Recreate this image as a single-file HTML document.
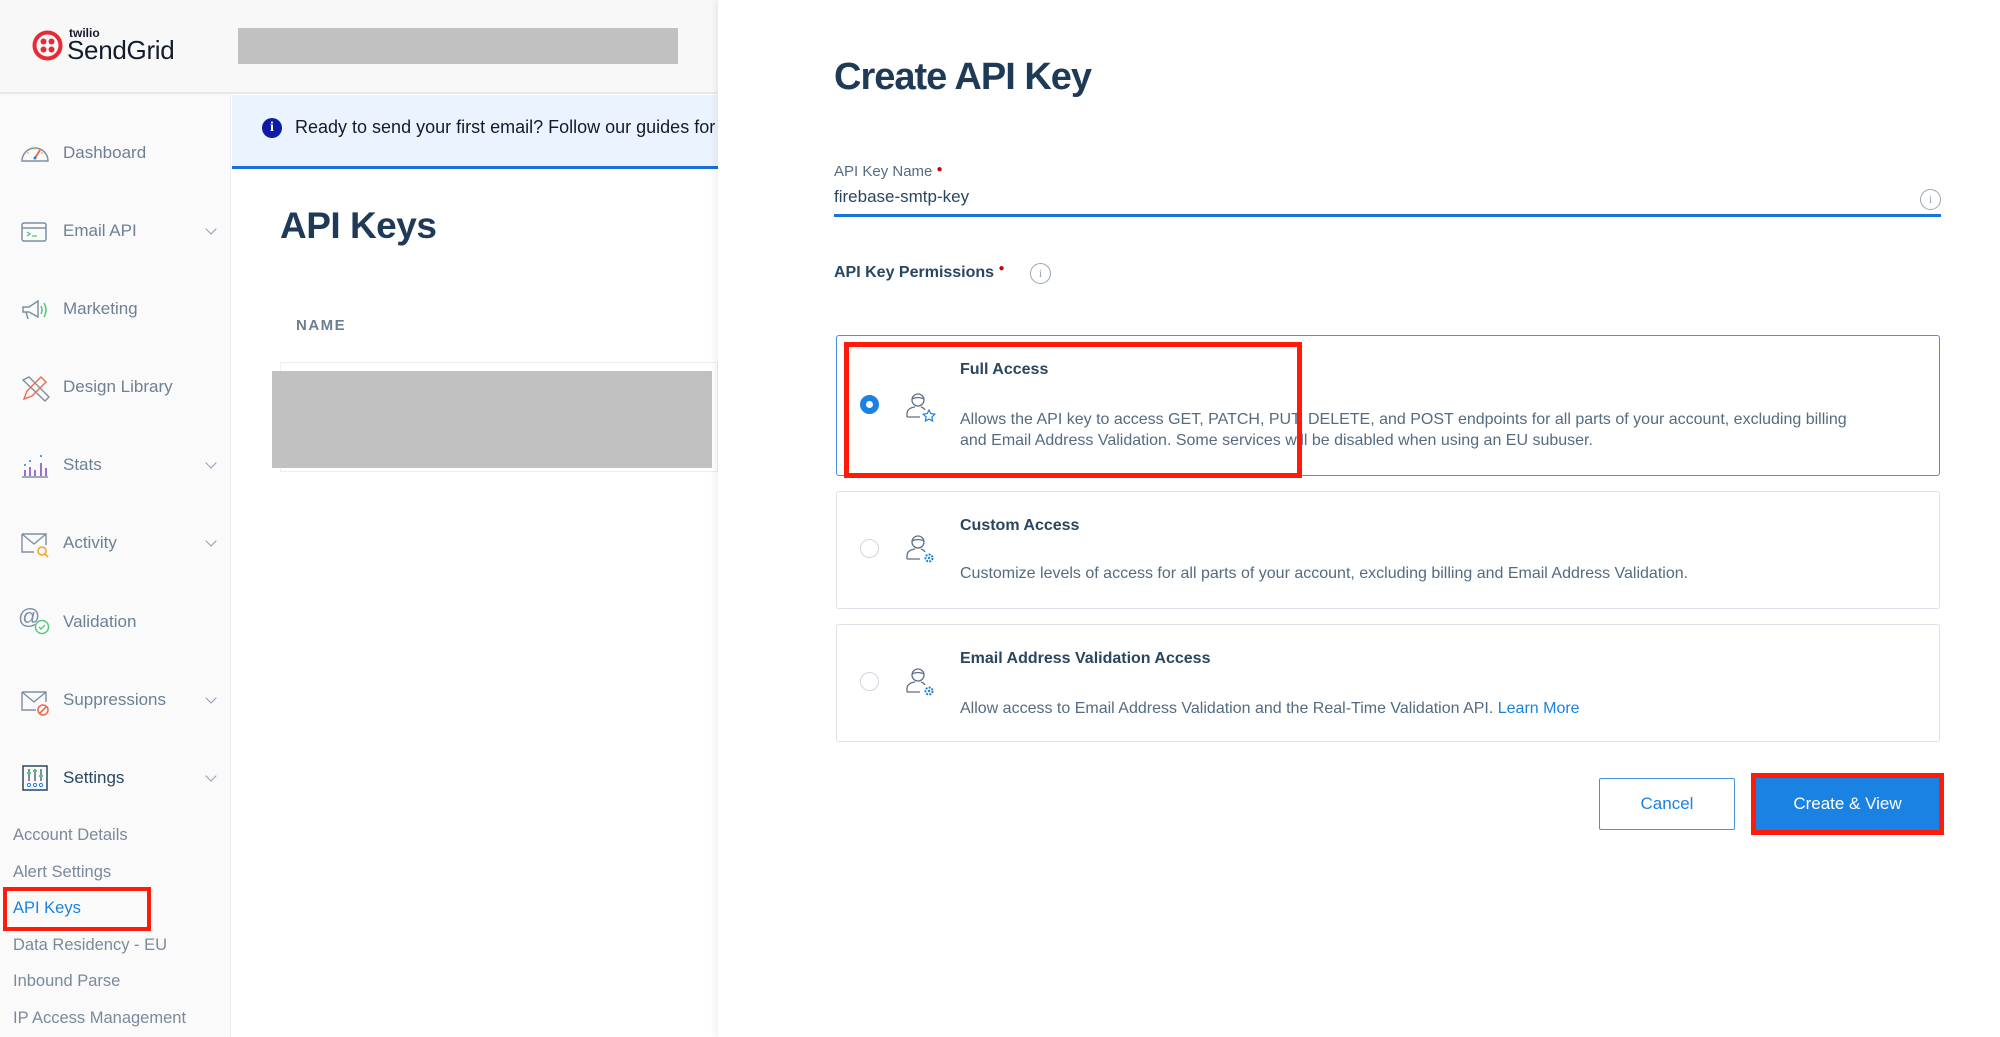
<!DOCTYPE html>
<html><head><meta charset="utf-8">
<style>
*{margin:0;padding:0;box-sizing:border-box}
body{width:2000px;height:1037px;overflow:hidden;background:#fff;font-family:"Liberation Sans",sans-serif;position:relative}
.abs{position:absolute}
.side{left:0;top:94px;width:231px;height:943px;background:#fafafa;border-right:1px solid #eceff2}
.hdr{left:0;top:0;width:718px;height:94px;background:#f8f8f8;border-bottom:2px solid #e6e9ee}
.nav{position:absolute;left:63px;font-size:17px;color:#6d8096;line-height:20px}
.ico{position:absolute;left:20px}
.chev{position:absolute;left:207px;width:8px;height:8px;border-right:1.5px solid #8a9bb0;border-bottom:1.5px solid #8a9bb0;transform:rotate(45deg)}
.sub{position:absolute;left:13px;font-size:16.5px;color:#7a8a9c;line-height:20px}
.panel{left:718px;top:0;width:1282px;height:1037px;background:#fff;box-shadow:-3px 0 6px rgba(0,0,0,0.06)}
.card{position:absolute;left:836px;width:1104px;border:1.5px solid #dde2e8;border-radius:3px;background:#fff}
.ct{position:absolute;left:960px;font-size:16px;font-weight:bold;color:#294661}
.cd{position:absolute;left:960px;font-size:16px;color:#546b81;line-height:21px;width:900px}
.radio{position:absolute;left:860px;width:19px;height:19px;border-radius:50%;border:1.5px solid #cfd6de;background:#fff}
</style></head><body>
<div class="abs hdr"></div>
<svg class="abs" style="left:32px;top:30px" width="31" height="31" viewBox="0 0 31 31"><circle cx="15.5" cy="15.5" r="13" fill="none" stroke="#e42c36" stroke-width="4"/><circle cx="11.5" cy="11.5" r="3" fill="#e42c36"/><circle cx="19.5" cy="11.5" r="3" fill="#e42c36"/><circle cx="11.5" cy="19.5" r="3" fill="#e42c36"/><circle cx="19.5" cy="19.5" r="3" fill="#e42c36"/></svg>
<div class="abs" style="left:69px;top:27px;font-size:12px;font-weight:bold;color:#121c2d;line-height:12px">twilio</div>
<div class="abs" style="left:67px;top:36px;font-size:26px;color:#121c2d;line-height:28px;letter-spacing:-0.3px">SendGrid</div>
<div class="abs" style="left:238px;top:28px;width:440px;height:36px;background:#c1c1c1"></div>

<div class="abs side"></div>
<svg class="ico" style="top:141px" width="30" height="22" viewBox="0 0 30 22"><path d="M2 20 A13 13 0 0 1 28 20 Z" fill="none" stroke="#7d8fa3" stroke-width="1.5"/><path d="M15 17 L20 9" stroke="#ee6b4d" stroke-width="2"/><circle cx="15" cy="17" r="1.5" fill="#1a82e2"/><circle cx="8" cy="12" r="1" fill="#f7c842"/><circle cx="15" cy="8" r="1" fill="#f7c842"/><circle cx="22" cy="12" r="1" fill="#f7c842"/></svg>
<div class="nav" style="top:143px">Dashboard</div>
<svg class="ico" style="top:221px" width="28" height="22" viewBox="0 0 28 22"><rect x="2" y="2" width="24" height="18" rx="2" fill="none" stroke="#7d8fa3" stroke-width="1.5"/><path d="M2 7 H26" stroke="#7d8fa3" stroke-width="1.5"/><path d="M7 11 l3 2 -3 2" fill="none" stroke="#52c97b" stroke-width="1.3"/><path d="M12 15 h5" stroke="#52c97b" stroke-width="1.3"/></svg>
<div class="nav" style="top:221px">Email API</div><div class="chev" style="top:225px"></div>
<svg class="ico" style="top:298px" width="30" height="24" viewBox="0 0 30 24"><path d="M3 9 h6 l9 -6 v16 l-9 -5 h-6 z M6 14 l2 7" fill="none" stroke="#7d8fa3" stroke-width="1.5"/><path d="M21 8 q2 4 0 8 M24 5 q4 7 0 14" fill="none" stroke="#52c97b" stroke-width="1.5"/></svg>
<div class="nav" style="top:299px">Marketing</div>
<svg class="ico" style="top:375px" width="30" height="28" viewBox="0 0 30 28"><path d="M3 5 l6 -3 20 20 -4 4 z" fill="none" stroke="#7d8fa3" stroke-width="1.4"/><path d="M4 24 l3 -8 14 -14 5 5 -14 14 z" fill="none" stroke="#ee6b4d" stroke-width="1.4"/></svg>
<div class="nav" style="top:377px">Design Library</div>
<svg class="ico" style="top:453px" width="30" height="26" viewBox="0 0 30 26"><path d="M2 24 H28" stroke="#7d8fa3" stroke-width="1.5"/><path d="M5 23 v-6 M10 23 v-9 M15 23 v-6 M21 23 v-13 M26 23 v-8" stroke="#9b6ed8" stroke-width="2"/><circle cx="5" cy="12" r="1" fill="#1a82e2"/><circle cx="10" cy="8" r="1" fill="#1a82e2"/><circle cx="21" cy="3" r="1" fill="#1a82e2"/></svg>
<div class="nav" style="top:455px">Stats</div><div class="chev" style="top:459px"></div>
<svg class="ico" style="top:531px" width="32" height="28" viewBox="0 0 32 28"><path d="M2 3 h24 v11 M2 3 v18 h12 M2 3 l12 10 12 -10" fill="none" stroke="#7d8fa3" stroke-width="1.4"/><circle cx="22" cy="20" r="4" fill="none" stroke="#f6a623" stroke-width="1.6"/><path d="M25 23 l3 3" stroke="#f6a623" stroke-width="1.6"/></svg>
<div class="nav" style="top:533px">Activity</div><div class="chev" style="top:537px"></div>
<svg class="ico" style="top:604px;left:18px" width="34" height="32" viewBox="0 0 34 32"><text x="0" y="20" font-family="Liberation Sans" font-size="22" fill="#7d8fa3">@</text><circle cx="24" cy="23" r="6.5" fill="#fff" stroke="#52c97b" stroke-width="1.5"/><path d="M21 23 l2 2 4 -4" fill="none" stroke="#52c97b" stroke-width="1.5"/></svg>
<div class="nav" style="top:612px">Validation</div>
<svg class="ico" style="top:689px" width="32" height="28" viewBox="0 0 32 28"><path d="M2 3 h24 v10 M2 3 v18 h14 M2 3 l12 10 12 -10" fill="none" stroke="#7d8fa3" stroke-width="1.4"/><circle cx="23" cy="21" r="5" fill="none" stroke="#ee6b4d" stroke-width="1.6"/><path d="M20 24 l6 -6" stroke="#ee6b4d" stroke-width="1.6"/></svg>
<div class="nav" style="top:690px">Suppressions</div><div class="chev" style="top:694px"></div>
<svg class="ico" style="top:765px;left:22px" width="26" height="26" viewBox="0 0 26 26"><rect x="1" y="1" width="24" height="24" fill="none" stroke="#294661" stroke-width="1.5"/><path d="M7 4 v12 M13 4 v12 M19 4 v12" stroke="#294661" stroke-width="1.2"/><path d="M5 8 h4 M11 6 h4 M17 11 h4" stroke="#52c97b" stroke-width="2"/><circle cx="7" cy="20" r="1.6" fill="none" stroke="#1a82e2"/><circle cx="13" cy="20" r="1.6" fill="none" stroke="#1a82e2"/><circle cx="19" cy="20" r="1.6" fill="none" stroke="#1a82e2"/></svg>
<div class="nav" style="top:768px;color:#294661">Settings</div><div class="chev" style="top:772px"></div>
<div class="sub" style="top:825px">Account Details</div>
<div class="sub" style="top:862px">Alert Settings</div>
<div class="sub" style="top:898px;color:#1a82e2">API Keys</div>
<div class="sub" style="top:935px">Data Residency - EU</div>
<div class="sub" style="top:971px">Inbound Parse</div>
<div class="sub" style="top:1008px">IP Access Management</div>
<div class="abs" style="left:3px;top:887px;width:148px;height:44px;border:4px solid #ff1a0a"></div>

<div class="abs" style="left:232px;top:95px;width:486px;height:74px;background:#ebf3fe;border-bottom:3px solid #1a6fd8"></div>
<div class="abs" style="left:262px;top:118px;width:20px;height:20px;border-radius:50%;background:#0e1ba6;color:#fff;font-size:14px;font-weight:bold;text-align:center;line-height:20px;font-family:'Liberation Serif',serif">i</div>
<div class="abs" style="left:295px;top:117px;font-size:18px;color:#121c2d;white-space:nowrap;width:423px;overflow:hidden">Ready to send your first email? Follow our guides for</div>
<div class="abs" style="left:280px;top:205px;font-size:37px;font-weight:bold;color:#1f3a56;letter-spacing:-0.5px">API Keys</div>
<div class="abs" style="left:296px;top:317px;font-size:15px;font-weight:bold;color:#6b7f94;letter-spacing:1.5px">NAME</div>
<div class="abs" style="left:280px;top:362px;width:438px;height:110px;border:1.5px solid #eceff2"></div>
<div class="abs" style="left:272px;top:371px;width:440px;height:97px;background:#c1c1c1"></div>

<div class="abs panel"></div>
<div class="abs" style="left:834px;top:56px;font-size:38px;font-weight:bold;color:#1f3a56;letter-spacing:-1px">Create API Key</div>
<div class="abs" style="left:834px;top:163px;font-size:15px;color:#546b81">API Key Name <span style="color:#c00;font-size:10px;vertical-align:4px">●</span></div>
<div class="abs" style="left:834px;top:187px;font-size:17px;color:#294661">firebase-smtp-key</div>
<div class="abs" style="left:834px;top:214px;width:1107px;height:3px;background:#1a73d8"></div>
<div class="abs" style="left:1920px;top:189px;width:21px;height:21px;border:1px solid #9aa6b4;border-radius:50%;font-size:12px;color:#9aa6b4;text-align:center;line-height:19px;font-family:'Liberation Serif',serif">i</div>
<div class="abs" style="left:834px;top:263px;font-size:16px;font-weight:bold;color:#294661">API Key Permissions <span style="color:#c00;font-size:10px;vertical-align:6px">●</span></div>
<div class="abs" style="left:1030px;top:263px;width:21px;height:21px;border:1px solid #9aa6b4;border-radius:50%;font-size:12px;color:#9aa6b4;text-align:center;line-height:19px;font-family:'Liberation Serif',serif">i</div>

<div class="card" style="top:335px;height:141px;border-color:#4a90e2"></div>
<div class="card" style="top:491px;height:118px"></div>
<div class="card" style="top:624px;height:118px"></div>

<div class="radio" style="top:395px;border:6px solid #1a82e2"></div>
<div class="radio" style="top:539px"></div>
<div class="radio" style="top:672px"></div>

<svg class="abs" style="left:903px;top:390px" width="34" height="34" viewBox="0 0 34 34"><circle cx="15" cy="10" r="6" fill="none" stroke="#5d6f82" stroke-width="1.3"/><path d="M9 9 q6 -3 12 0" fill="none" stroke="#5d6f82" stroke-width="1.2"/><path d="M4 27 v-3 q0 -6 8 -7 M18 17 q3 1 4 3 M4 27 h13" fill="none" stroke="#5d6f82" stroke-width="1.3"/><path d="M26 20 l1.8 3.6 4 .6 -2.9 2.8 .7 4 -3.6 -1.9 -3.6 1.9 .7 -4 -2.9 -2.8 4 -.6z" fill="none" stroke="#1a82e2" stroke-width="1.2"/></svg>
<svg class="abs" style="left:903px;top:532px" width="34" height="34" viewBox="0 0 34 34"><circle cx="15" cy="10" r="6" fill="none" stroke="#5d6f82" stroke-width="1.3"/><path d="M9 9 q6 -3 12 0" fill="none" stroke="#5d6f82" stroke-width="1.2"/><path d="M4 27 v-3 q0 -6 8 -7 M18 17 q3 1 4 3 M4 27 h13" fill="none" stroke="#5d6f82" stroke-width="1.3"/><circle cx="26" cy="26" r="3.5" fill="none" stroke="#1a82e2" stroke-width="2" stroke-dasharray="2 1.2"/><circle cx="26" cy="26" r="1.2" fill="#1a82e2"/></svg>
<svg class="abs" style="left:903px;top:665px" width="34" height="34" viewBox="0 0 34 34"><circle cx="15" cy="10" r="6" fill="none" stroke="#5d6f82" stroke-width="1.3"/><path d="M9 9 q6 -3 12 0" fill="none" stroke="#5d6f82" stroke-width="1.2"/><path d="M4 27 v-3 q0 -6 8 -7 M18 17 q3 1 4 3 M4 27 h13" fill="none" stroke="#5d6f82" stroke-width="1.3"/><circle cx="26" cy="26" r="3.5" fill="none" stroke="#1a82e2" stroke-width="2" stroke-dasharray="2 1.2"/><circle cx="26" cy="26" r="1.2" fill="#1a82e2"/></svg>

<div class="ct" style="top:361px">Full Access</div>
<div class="cd" style="top:409px">Allows the API key to access GET, PATCH, PUT, DELETE, and POST endpoints for all parts of your account, excluding billing and Email Address Validation. Some services will be disabled when using an EU subuser.</div>
<div class="ct" style="top:517px">Custom Access</div>
<div class="cd" style="top:563px">Customize levels of access for all parts of your account, excluding billing and Email Address Validation.</div>
<div class="ct" style="top:650px">Email Address Validation Access</div>
<div class="cd" style="top:698px">Allow access to Email Address Validation and the Real-Time Validation API. <span style="color:#1a82e2">Learn More</span></div>

<div class="abs" style="left:844px;top:342px;width:458px;height:136px;border:5px solid #ff1a0a"></div>

<div class="abs" style="left:1599px;top:778px;width:136px;height:52px;border:1.5px solid #4a90e2;border-radius:2px;color:#1a82e2;font-size:17px;text-align:center;line-height:49px">Cancel</div>
<div class="abs" style="left:1751px;top:773px;width:193px;height:62px;border:5px solid #ff1a0a;background:#1a82e2;color:#fff;font-size:17px;text-align:center;line-height:52px">Create &amp; View</div>
</body></html>
